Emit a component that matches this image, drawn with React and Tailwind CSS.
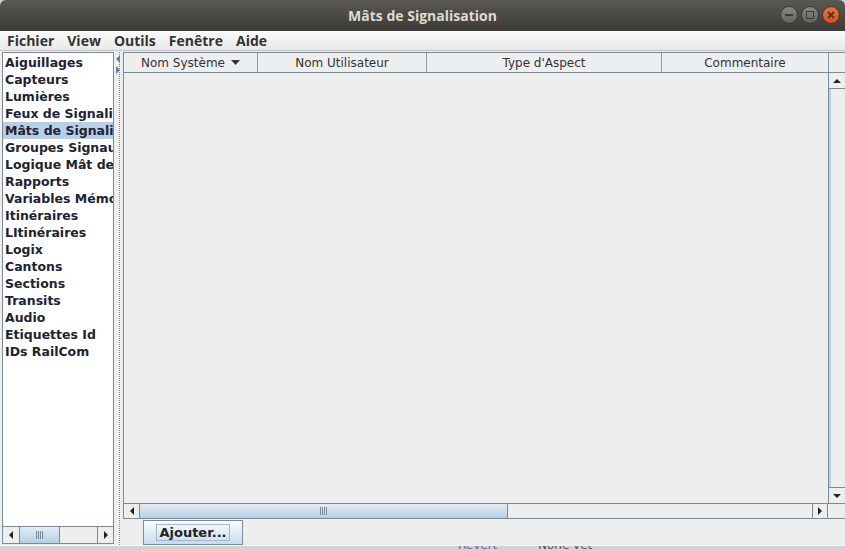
import React from 'react';

const items = [
  'Aiguillages', 'Capteurs', 'Lumières', 'Feux de Signalisation', 'Mâts de Signalisation',
  'Groupes Signaux', 'Logique Mât de Signalisation', 'Rapports', 'Variables Mémoire',
  'Itinéraires', 'LItinéraires', 'Logix', 'Cantons', 'Sections', 'Transits', 'Audio',
  'Etiquettes Id', 'IDs RailCom',
];

const columns = [
  { label: 'Nom Système', w: 'w-[134px]', sort: true },
  { label: 'Nom Utilisateur', w: 'w-[169px]' },
  { label: "Type d'Aspect", w: 'w-[235px]' },
  { label: 'Commentaire', w: 'w-[167px]' },
];

function Arrow({ dir }) {
  const pts = {
    left: '5,0 5,8 1,4',
    right: '1,0 1,8 5,4',
    up: '0,5 8,5 4,1',
    down: '0,1 8,1 4,5',
  }[dir];
  const horiz = dir === 'left' || dir === 'right';
  return (
    <svg width={horiz ? 6 : 9} height={horiz ? 9 : 6} viewBox={horiz ? '0 0 6 9' : '0 0 9 6'}>
      <polygon points={pts} fill="#222" />
    </svg>
  );
}

function ArrowButton({ dir, className = '' }) {
  return (
    <div className={`flex items-center justify-center bg-[#eeeeee] border-[#7a8a99] ${className}`}>
      <Arrow dir={dir} />
    </div>
  );
}

function Grip() {
  return (
    <div className="flex flex-row gap-[1px]">
      {[0, 1, 2, 3].map((i) => (
        <div key={i} className="w-[1px] h-[8px] bg-[#7a8a99]" />
      ))}
    </div>
  );
}

export default function App() {
  return (
    <div className="w-[845px] h-[549px] overflow-hidden bg-[#c9c9c9] flex flex-col" style={{ fontFamily: '"DejaVu Sans", sans-serif' }}>
      {/* Title bar */}
      <div className="h-[31px] shrink-0 rounded-t-[6px] bg-gradient-to-b from-[#5a5852] to-[#3c3b37] flex items-center justify-center relative">
        <span className="text-[14px] font-bold text-[#dfdbd2]" style={{ fontFamily: '"Open Sans", "Liberation Sans", sans-serif' }}>
          Mâts de Signalisation
        </span>
        <div className="absolute right-[5px] top-[6px] flex gap-[3px]">
          <div className="w-[18px] h-[18px] rounded-full bg-gradient-to-b from-[#8a8883] to-[#65635e] border border-[#3a3935] flex items-center justify-center">
            <div className="w-[8px] h-[2px] bg-[#3c3b37]" />
          </div>
          <div className="w-[18px] h-[18px] rounded-full bg-gradient-to-b from-[#8a8883] to-[#65635e] border border-[#3a3935] flex items-center justify-center">
            <div className="w-[8px] h-[8px] border-[1.5px] border-[#3c3b37]" />
          </div>
          <div className="w-[18px] h-[18px] rounded-full bg-gradient-to-b from-[#f0713f] to-[#d9501e] border border-[#3a3935] flex items-center justify-center">
            <svg width="8" height="8" viewBox="0 0 8 8">
              <path d="M1 1 L7 7 M7 1 L1 7" stroke="#3c3b37" strokeWidth="1.8" />
            </svg>
          </div>
        </div>
      </div>

      {/* Menu bar */}
      <div
        className="h-[20px] shrink-0 bg-gradient-to-b from-[#fbfbfb] to-[#e8e8e8] border-b border-[#c4c4c4] flex items-center gap-[13px] pl-[7px] text-[14px] font-bold text-[#333333]"
        style={{ fontFamily: '"Open Sans", "Liberation Sans", sans-serif' }}
      >
        <span>Fichier</span>
        <span>View</span>
        <span>Outils</span>
        <span>Fenêtre</span>
        <span>Aide</span>
      </div>

      {/* Body */}
      <div className="h-[494px] shrink-0 bg-[#eeeeee] flex pl-[2px] pt-[1px]">
        {/* Left list */}
        <div className="w-[112px] h-[492px] flex flex-col border border-[#7a8a99] bg-white">
          <div className="flex-1 overflow-hidden pt-[1px]">
            {items.map((t, i) => (
              <div
                key={t}
                className={`h-[17px] pl-[2px] text-[12.5px] font-bold leading-[17px] whitespace-nowrap overflow-hidden text-[#222233] ${i === 4 ? 'bg-[#b8cfe5]' : ''}`}
              >
                {t}
              </div>
            ))}
          </div>
          <div className="h-[17px] flex border-t border-[#7a8a99] bg-[#eeeeee]">
            <ArrowButton dir="left" className="w-[17px] border-r" />
            <div className="w-[40px] bg-gradient-to-b from-[#e3ecf6] to-[#b8cfe5] border-r border-[#7a8a99] flex items-center justify-center">
              <Grip />
            </div>
            <div className="flex-1" />
            <ArrowButton dir="right" className="w-[16px] border-l" />
          </div>
        </div>

        {/* Divider */}
        <div className="w-[9px] relative flex justify-center">
          <div className="h-full w-0 border-l border-dotted border-[#8a8a8a] ml-[1px]" />
          <svg className="absolute left-[2px] top-[3px]" width="5" height="20" viewBox="0 0 5 20">
            <polygon points="4,0 4,8 0,4" fill="#5d82b0" />
            <polygon points="0,11 0,19 4,15" fill="#5d82b0" />
          </svg>
        </div>

        {/* Right panel */}
        <div className="flex-1 flex flex-col">
          <div className="h-[467px] flex flex-col border-l border-t border-[#7a8a99]">
            {/* Header */}
            <div className="h-[20px] flex border-b border-[#7a8a99]">
              {columns.map((c) => (
                <div
                  key={c.label}
                  className={`${c.w} border-r border-[#8a99a6] flex items-center justify-center text-[12px] text-[#333333]`}
                >
                  {c.label}
                  {c.sort && (
                    <svg className="ml-[6px]" width="9" height="5" viewBox="0 0 9 5">
                      <polygon points="0,0 9,0 4.5,5" fill="#333" />
                    </svg>
                  )}
                </div>
              ))}
              <div className="flex-1" />
            </div>
            {/* Table body and vertical scrollbar */}
            <div className="flex-1 flex">
              <div className="flex-1" />
              <div className="w-[17px] flex flex-col border-l border-[#7a8a99]">
                <ArrowButton dir="up" className="h-[16px] border-b" />
                <div className="flex-1 border-l-[2px] border-[#b8cfe5]" />
                <ArrowButton dir="down" className="h-[16px] border-t" />
              </div>
            </div>
            {/* Horizontal scrollbar */}
            <div className="h-[16px] flex border-t border-b border-[#7a8a99]">
              <ArrowButton dir="left" className="w-[16px] border-r" />
              <div className="w-[368px] bg-gradient-to-b from-[#e3ecf6] to-[#b8cfe5] border-r border-[#7a8a99] flex items-center justify-center">
                <Grip />
              </div>
              <div className="w-[304px]" />
              <ArrowButton dir="right" className="w-[16px] border-l border-r" />
              <div className="flex-1" />
            </div>
          </div>
          {/* Button row */}
          <div className="flex-1 flex items-start pl-[20px] pt-[1px]">
            <div className="w-[100px] h-[25px] border border-[#7a8a99] bg-gradient-to-b from-[#fbfdff] to-[#c9dbee] flex items-center justify-center">
              <span className="px-[2px] border border-[#a3b8cc] text-[13px] font-bold leading-[15px] text-[#222]">Ajouter...</span>
            </div>
          </div>
        </div>
      </div>

      {/* Window behind */}
      <div className="h-[4px] shrink-0 border-t border-[#f7f7f7] bg-[#d2d2d2] relative overflow-hidden">
        <span className="absolute left-[458px] top-[-10px] text-[12px] text-[#3b6fb6]">Revert</span>
        <span className="absolute left-[538px] top-[-10px] text-[12px] text-[#555]">None yet</span>
      </div>
    </div>
  );
}
